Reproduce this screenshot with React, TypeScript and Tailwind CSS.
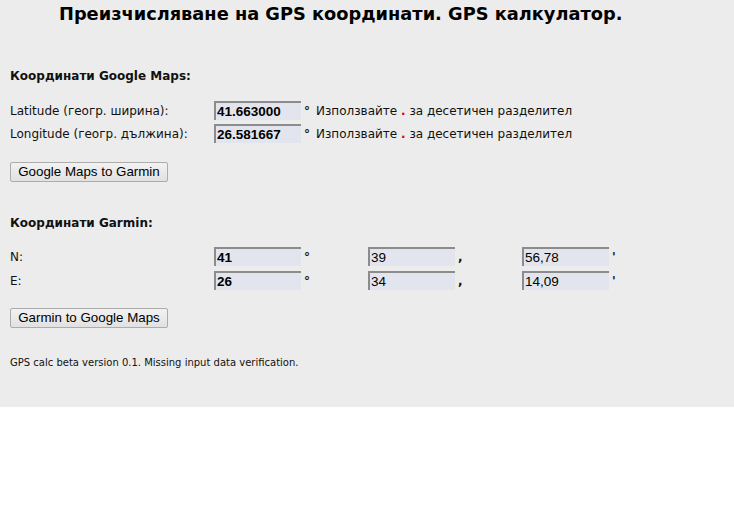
import React from 'react';

const inputCls =
  "w-[87px] h-[19px] bg-[#e3e5ee] border-t-2 border-l-2 border-[#8c8c8c] pl-[1px] text-black text-[13.5px] font-['Liberation_Sans',Arial,sans-serif] leading-[17px] outline-none";

const btnCls =
  "w-[158px] h-[20px] border border-[#acacac] rounded-[2px] bg-gradient-to-b from-[#f2f2f2] to-[#e1e1e1] text-[13.33px] text-black font-['Liberation_Sans',Arial,sans-serif] leading-[18px]";

const Hint = () => (
  <span className="ml-[6px]">
    Използвайте <span className="font-bold text-[#e00000]">.</span> за десетичен разделител
  </span>
);

const GarminCell = ({ value, bold, suffix }: { value: string; bold?: boolean; suffix: string }) => (
  <div className="w-[154px] flex items-start">
    <input readOnly value={value} className={`${inputCls} ${bold ? 'font-bold' : 'font-normal'}`} />
    <span className="ml-[3px] font-bold leading-[20px]">{suffix}</span>
  </div>
);

export default function App() {
  return (
    <div className="bg-[#ececec] h-[407px] text-[#111] text-[12px] font-['DejaVu_Sans',Verdana,sans-serif]">
      <h1 className="pl-[59px] pt-[3px] text-[17.8px] font-bold leading-[22px] text-black">
        Преизчисляване на GPS координати. GPS калкулатор.
      </h1>

      <div className="px-[10px]">
        <h2 className="mt-[43px] text-[12px] font-bold leading-[16px]">Координати Google Maps:</h2>

        <div className="mt-[17px] flex flex-col gap-[4px]">
          <div className="flex items-center">
            <span className="w-[204px]">Latitude (геогр. ширина):</span>
            <input readOnly value="41.663000" className={`${inputCls} font-bold`} />
            <span className="ml-[3px] font-bold">°</span>
            <Hint />
          </div>
          <div className="flex items-center">
            <span className="w-[204px]">Longitude (геогр. дължина):</span>
            <input readOnly value="26.581667" className={`${inputCls} font-bold`} />
            <span className="ml-[3px] font-bold">°</span>
            <Hint />
          </div>
        </div>

        <button className={`${btnCls} mt-[19px] block`}>Google Maps to Garmin</button>

        <h2 className="mt-[33px] text-[12px] font-bold leading-[16px]">Координати Garmin:</h2>

        <div className="mt-[16px] flex flex-col gap-[4px]">
          <div className="flex items-center">
            <span className="w-[204px]">N:</span>
            <GarminCell value="41" bold suffix="°" />
            <GarminCell value="39" suffix="," />
            <GarminCell value="56,78" suffix="'" />
          </div>
          <div className="flex items-center">
            <span className="w-[204px]">E:</span>
            <GarminCell value="26" bold suffix="°" />
            <GarminCell value="34" suffix="," />
            <GarminCell value="14,09" suffix="'" />
          </div>
        </div>

        <button className={`${btnCls} mt-[17px] block`}>Garmin to Google Maps</button>

        <p className="mt-[28px] text-[10px] leading-[13px]">
          GPS calc beta version 0.1. Missing input data verification.
        </p>
      </div>
    </div>
  );
}
